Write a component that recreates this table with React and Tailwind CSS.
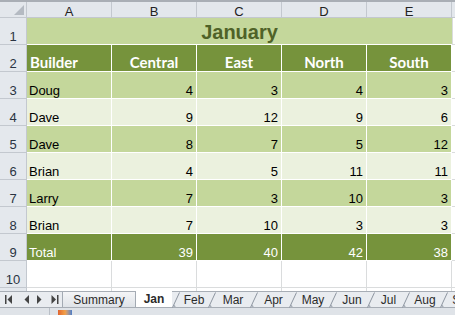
import React from "react";

const data = [
  ["Doug", 4, 3, 4, 3],
  ["Dave", 9, 12, 9, 6],
  ["Dave", 8, 7, 5, 12],
  ["Brian", 4, 5, 11, 11],
  ["Larry", 7, 3, 10, 3],
  ["Brian", 7, 10, 3, 3],
];

const heads = ["Central", "East", "North", "South"];

const Slash = () => (
  <svg width="8" height="16" viewBox="0 0 8 16" className="shrink-0">
    <line x1="0.5" y1="15.5" x2="7.5" y2="0.5" stroke="#8d95a0" strokeWidth="1" />
    <polygon points="1,15.5 4,15.5 2.5,12.5" fill="#a9b0b9" />
  </svg>
);

const RowHead = ({ n }) => (
  <div className="w-[27px] shrink-0 flex items-end justify-center pb-[1px] leading-none bg-[#e4e8ed] border-r border-b border-[#c3c8cf] text-[13px] text-[#2a3442] font-['Liberation_Sans',Arial,sans-serif] font-normal">
    {n}
  </div>
);

export default function App() {
  return (
    <div className="w-[455px] h-[315px] overflow-hidden bg-white flex flex-col font-['Liberation_Sans',Arial,sans-serif]">
      {/* column letters */}
      <div className="flex h-[18px] shrink-0 border-t-2 border-[#a9aeb5] bg-[#e3e7ec] text-[13px] leading-none text-[#222]">
        <div className="w-[27px] shrink-0 border-r border-b border-[#c3c8cf] flex items-end justify-end p-[2px]">
          <svg width="10" height="10" viewBox="0 0 10 10">
            <polygon points="10,0 10,10 0,10" fill="#b4bac2" />
          </svg>
        </div>
        {["A", "B", "C", "D", "E"].map((l) => (
          <div key={l} className="w-[85px] shrink-0 border-r border-b border-[#c3c8cf] flex items-start justify-center pt-[3px]">
            {l}
          </div>
        ))}
        <div className="flex-1 border-b border-[#c3c8cf]" />
      </div>

      {/* row 1 title */}
      <div className="flex h-[27px] shrink-0">
        <RowHead n={1} />
        <div className="w-[425px] shrink-0 bg-[#c4d79b] border-b border-white flex items-end justify-center pb-[2px] leading-none text-[20px] font-bold text-[#4f6228]">
          January
        </div>
        <div className="flex-1 border-l border-b border-[#dadcdd]" />
      </div>

      {/* row 2 headers */}
      <div className="flex h-[27px] shrink-0 text-[15px] leading-none font-bold text-white font-['Lato',sans-serif]">
        <RowHead n={2} />
        <div className="w-[85px] shrink-0 bg-[#76933c] border-r border-b border-white flex items-end pl-[3px] pb-[1px]">
          Builder
        </div>
        {heads.map((h) => (
          <div key={h} className="w-[85px] shrink-0 bg-[#76933c] border-r border-b border-white flex items-end justify-center pb-[1px]">
            {h}
          </div>
        ))}
        <div className="flex-1 border-b border-[#dadcdd]" />
      </div>

      {/* data rows */}
      {data.map((r, i) => {
        const bg = i % 2 === 0 ? "bg-[#c4d79b]" : "bg-[#ebf1de]";
        return (
          <div key={i} className="flex h-[27px] shrink-0 text-[13px] leading-none text-black">
            <RowHead n={i + 3} />
            <div className={`w-[85px] shrink-0 ${bg} border-r border-b border-white flex items-end pl-[2px] pb-[1px]`}>
              {r[0]}
            </div>
            {r.slice(1).map((v, j) => (
              <div key={j} className={`w-[85px] shrink-0 ${bg} border-r border-b border-white flex items-end justify-end pr-[3px] pb-[1px]`}>
                {v}
              </div>
            ))}
            <div className="flex-1 border-b border-[#dadcdd]" />
          </div>
        );
      })}

      {/* total */}
      <div className="flex h-[27px] shrink-0 text-[13px] leading-none text-white">
        <RowHead n={9} />
        <div className="w-[85px] shrink-0 bg-[#76933c] border-r border-b border-white flex items-end pl-[2px] pb-[1px]">
          Total
        </div>
        {[39, 40, 42, 38].map((v, j) => (
          <div key={j} className="w-[85px] shrink-0 bg-[#76933c] border-r border-b border-white flex items-end justify-end pr-[3px] pb-[1px]">
            {v}
          </div>
        ))}
        <div className="flex-1 border-b border-[#dadcdd]" />
      </div>

      {/* row 10 */}
      <div className="flex h-[27px] shrink-0">
        <RowHead n={10} />
        {[0, 1, 2, 3, 4].map((j) => (
          <div key={j} className="w-[85px] shrink-0 border-r border-b border-[#dadcdd]" />
        ))}
        <div className="flex-1 border-b border-[#dadcdd]" />
      </div>

      {/* partial row 11 */}
      <div className="flex h-[3px] shrink-0">
        <div className="w-[27px] shrink-0 bg-[#e4e8ed] border-r border-[#c3c8cf]" />
        {[0, 1, 2, 3, 4].map((j) => (
          <div key={j} className="w-[85px] shrink-0 border-r border-[#dadcdd]" />
        ))}
      </div>

      {/* sheet tabs */}
      <div className="flex h-[17px] shrink-0 border-t border-[#8f969f] bg-[#e9ecf0] text-[12px] text-[#2b2b2b] border-b border-[#a7adb5]">
        <div className="w-[62px] shrink-0 flex items-center gap-[6px] pl-[5px]">
          <svg width="8" height="9" viewBox="0 0 8 9">
            <rect x="0" y="0" width="1.5" height="9" fill="#444" />
            <polygon points="7,0 7,9 2.5,4.5" fill="#444" />
          </svg>
          <svg width="7" height="9" viewBox="0 0 7 9" className="ml-[4px]">
            <polygon points="6,0 6,9 1.5,4.5" fill="#444" />
          </svg>
          <svg width="7" height="9" viewBox="0 0 7 9">
            <polygon points="1,0 1,9 5.5,4.5" fill="#444" />
          </svg>
          <svg width="8" height="9" viewBox="0 0 8 9" className="ml-[2px]">
            <polygon points="0.5,0 0.5,9 5,4.5" fill="#444" />
            <rect x="6" y="0" width="1.5" height="9" fill="#444" />
          </svg>
        </div>
        <div className="w-[74px] shrink-0 flex items-center justify-center border-x border-[#a3aab3] bg-gradient-to-b from-[#f4f5f7] to-[#dfe3e8]">
          Summary
        </div>
        <div className="w-[36px] shrink-0 flex items-center justify-center bg-white font-bold -mt-px">
          Jan
        </div>
        {[
          ["Feb", "w-[28px]"],
          ["Mar", "w-[34px]"],
          ["Apr", "w-[31px]"],
          ["May", "w-[32px]"],
          ["Jun", "w-[30px]"],
          ["Jul", "w-[27px]"],
          ["Aug", "w-[30px]"],
          ["Sep", "w-[30px]"],
        ].map(([t, w]) => (
          <React.Fragment key={t}>
            <Slash />
            <div className={`${w} shrink-0 flex items-center justify-center`}>{t}</div>
          </React.Fragment>
        ))}
      </div>

      {/* status strip */}
      <div className="flex flex-1 bg-[#dfe3e8]">
        <div className="w-[50px] shrink-0 border-r border-[#b9bfc7]" />
        <div className="ml-[8px] mt-[2px] w-[14px] h-[6px] bg-gradient-to-r from-[#e0632f] via-[#f3a046] to-[#4a7cc7]" />
      </div>
    </div>
  );
}
